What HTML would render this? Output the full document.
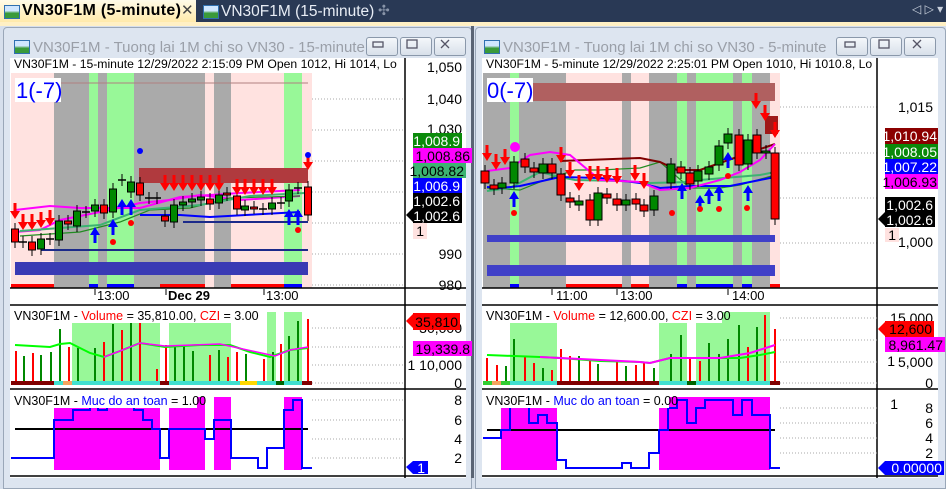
<!DOCTYPE html>
<html><head><meta charset="utf-8"><style>
body{margin:0;width:946px;height:478px;overflow:hidden;background:#d6dfec;font-family:"Liberation Sans",sans-serif;position:relative}
.tabbar{position:absolute;left:0;top:0;width:946px;height:23px;background:#293955}
.strip{position:absolute;left:0;top:22px;width:946px;height:4px;background:#fff0c4}
.tab1{position:absolute;left:0;top:0;width:196px;height:23px;background:linear-gradient(#fffbe8,#ffe9a8);}
.tab1 span{position:absolute;left:22px;top:2px;font-size:16px;letter-spacing:0.3px;font-weight:bold;color:#000}
.tab1 i{position:absolute;left:181px;top:1px;font-style:normal;font-size:15px;color:#444}
.tab2{position:absolute;left:202px;top:3px;font-size:15.5px;color:#e8edf5}
.ico{position:absolute;width:14px;height:12px;background:linear-gradient(#cfe6ff 40%,#3a9a3a 60%);border:1px solid #3070b0}
.win{position:absolute;top:27px;height:460px;background:#dde5f0;border:1px solid #9aa7b8;border-radius:4px 4px 0 0}
.title{position:absolute;top:11px;font-size:15px;color:#9a9fa8;white-space:nowrap}
.btn{position:absolute;top:9px;width:30px;height:17px;border:1px solid #8a98aa;border-radius:3px;background:linear-gradient(#f4f7fb,#d8e0ea)}
svg{position:absolute;left:0;top:0}
</style></head><body>
<div class="tabbar"></div>
<div class="tab1"><div class="ico" style="left:4px;top:5px"></div><span>VN30F1M (5-minute)</span><i>✕</i></div>
<div class="ico" style="left:203px;top:5px"></div><div class="tab2" style="left:221px">VN30F1M (15-minute)</div>
<div style="position:absolute;left:378px;top:2px;color:#8894a8;font-size:14px">✣</div>
<div style="position:absolute;left:912px;top:2px;color:#c8d0dc;font-size:12px">◁ ▷ ▾</div>
<div class="strip"></div>

<div class="win" style="left:3px;width:467px">
 <div class="ico" style="left:10px;top:12px"></div>
 <div class="title" style="left:29px">VN30F1M - Tuong lai 1M chi so VN30 - 15-minute</div>
 <div class="btn" style="left:362px"></div><div class="btn" style="left:396px"></div><div class="btn" style="left:430px"></div>
</div>
<div class="win" style="left:475px;width:469px">
 <div class="ico" style="left:8px;top:12px"></div>
 <div class="title" style="left:27px">VN30F1M - Tuong lai 1M chi so VN30 - 5-minute</div>
 <div class="btn" style="left:360px"></div><div class="btn" style="left:394px"></div><div class="btn" style="left:428px"></div>
</div>
<div style="position:absolute;left:471px;top:26px;width:3px;height:452px;background:#5a6474"></div>

<svg width="946" height="478" id="s" font-family="Liberation Sans, sans-serif">
<g stroke="#556" stroke-width="1.3" fill="none">
<rect x="373" y="42" width="10" height="5"/><rect x="407" y="40" width="10" height="8"/><path d="M441 40l8 8M449 40l-8 8"/>
<rect x="845" y="42" width="10" height="5"/><rect x="879" y="40" width="10" height="8"/><path d="M913 40l8 8M921 40l-8 8"/>
</g>
<!-- LEFT chart -->
<rect x="10" y="58" width="456" height="420" fill="#fff"/>
<rect x="11" y="73" width="301" height="215" fill="#ffe2e0"/>
<g fill="#aaaaaa"><rect x="54" y="73" width="35" height="215"/><rect x="98" y="73" width="9" height="215"/><rect x="134" y="73" width="71" height="215"/><rect x="214" y="73" width="17" height="215"/></g>
<g fill="#98f898"><rect x="89" y="73" width="9" height="215"/><rect x="107" y="73" width="27" height="215"/><rect x="284" y="73" width="18" height="215"/></g>
<rect x="11" y="284" width="43" height="4" fill="#f00"/><rect x="89" y="284" width="9" height="4" fill="#00f"/><rect x="107" y="284" width="27" height="4" fill="#00f"/><rect x="160" y="284" width="45" height="4" fill="#f00"/><rect x="231" y="284" width="53" height="4" fill="#f00"/><rect x="284" y="284" width="18" height="4" fill="#00f"/>
<line x1="60" y1="83" x2="308" y2="83" stroke="#b08080"/>
<rect x="15" y="78" width="46" height="24" fill="#fff"/>
<text x="16" y="98" font-size="22" fill="#0000ff">1(-7)</text>
<rect x="139" y="168" width="169" height="15" fill="#b03a3e"/>
<rect x="15" y="262" width="293" height="13" fill="#3a3ab4"/>
<line x1="41" y1="250" x2="308" y2="250" stroke="#1c2a8a" stroke-width="2"/>
<line x1="183" y1="222" x2="308" y2="222" stroke="#1c2a8a" stroke-width="2"/>
<polyline points="15,232 40,230 60,220 90,214 110,210 140,203 170,200 200,195 240,200 300,196" fill="none" stroke="#f0f" stroke-width="2"/>
<polyline points="15,210 50,206 80,208 140,208 180,197 240,193 300,190" fill="none" stroke="#f0f" stroke-width="2"/>
<polyline points="20,236 80,232 120,222 150,210 190,208 230,198 300,196" fill="none" stroke="#228b22" stroke-width="1.2"/>
<polyline points="20,231 100,225 140,210 200,205 250,196 305,193" fill="none" stroke="#3cb371" stroke-width="2"/>
<polyline points="140,215 180,215 210,217 300,212" fill="none" stroke="#0000ff" stroke-width="2"/>
<g id="lc"></g>
<text x="14" y="68" font-size="12.2" fill="#000">VN30F1M - 15-minute 12/29/2022 2:15:09 PM Open 1012, Hi 1014, Lo</text>
<g stroke="#aaa" stroke-dasharray="1,2"><line x1="312" y1="99" x2="405" y2="99"/><line x1="312" y1="130" x2="405" y2="130"/><line x1="312" y1="161" x2="405" y2="161"/><line x1="312" y1="192" x2="405" y2="192"/><line x1="312" y1="223" x2="405" y2="223"/><line x1="312" y1="254" x2="405" y2="254"/><line x1="312" y1="285" x2="405" y2="285"/></g>
<g font-size="14" fill="#000" text-anchor="end"><text x="462" y="72">1,050</text><text x="462" y="104">1,040</text><text x="462" y="134">1,030</text><text x="462" y="259">990</text><text x="462" y="290">980</text></g>
<g font-size="14" text-anchor="end">
<rect x="413" y="133" width="49" height="15" fill="#0a8a0a"/><text x="460" y="146" fill="#fff">1,008.9</text>
<rect x="413" y="148" width="59" height="15" fill="#f0f"/><text x="470" y="161" fill="#000">1,008.86</text>
<rect x="413" y="163" width="53" height="15" fill="#3cb371"/><text x="464" y="176" fill="#000">1,008.82</text>
<rect x="413" y="178" width="49" height="15" fill="#0000ff"/><text x="460" y="191" fill="#fff">1,006.9</text>
<rect x="413" y="193" width="49" height="30" fill="#000"/><polygon points="406,215 413,208 413,222" fill="#000"/><text x="460" y="206" fill="#fff">1,002.6</text><text x="460" y="221" fill="#fff">1,002.6</text>
<rect x="413" y="223" width="14" height="16" fill="#ffe2e0"/><text x="424" y="236" fill="#000">1</text></g>
<g stroke="#000" stroke-width="1.5"><line x1="405" y1="58" x2="405" y2="478"/><line x1="10" y1="288" x2="466" y2="288"/><line x1="10" y1="305" x2="466" y2="305"/><line x1="10" y1="389" x2="466" y2="389"/><line x1="10" y1="476" x2="466" y2="476"/></g>
<g stroke="#000"><line x1="95" y1="289" x2="95" y2="295"/><line x1="166" y1="289" x2="166" y2="295"/><line x1="264" y1="289" x2="264" y2="295"/></g>
<g font-size="13"><text x="97" y="300">13:00</text><text x="168" y="300" font-weight="bold">Dec 29</text><text x="266" y="300">13:00</text></g>
<!-- left volume -->
<g fill="#98f898"><rect x="72" y="312" width="88" height="69"/><rect x="169" y="312" width="62" height="69"/><rect x="267" y="312" width="9" height="69"/><rect x="284" y="312" width="18" height="69"/></g>
<rect x="11" y="381" width="301" height="4" fill="#40e0d0"/><rect x="11" y="381" width="43" height="4" fill="#800000"/><rect x="160" y="381" width="9" height="4" fill="#800000"/><rect x="276" y="381" width="8" height="4" fill="#006400"/><rect x="302" y="381" width="10" height="4" fill="#800000"/><rect x="240" y="381" width="17" height="4" fill="#ffd700"/><rect x="63" y="381" width="9" height="4" fill="#f4a460"/>
<g id="lv"></g>
<polyline points="15,345 50,347 60,344 70,343 90,353 104,357 120,351 140,343 165,347 200,345 230,345 250,352 270,357 290,350 308,348" fill="none" stroke="#0f0" stroke-width="2"/>
<polyline points="104,357 120,351 140,343 165,346 220,344 275,356 290,350 308,347" fill="none" stroke="#f0f" stroke-width="1.5"/>
<rect x="13" y="309" width="237" height="14" fill="#fff"/>
<text x="14" y="320" font-size="12.5"><tspan fill="#000">VN30F1M - </tspan><tspan fill="#f00">Volume</tspan><tspan fill="#000"> = 35,810.00, </tspan><tspan fill="#f00">CZI</tspan><tspan fill="#000"> = 3.00</tspan></text>
<g stroke="#aaa" stroke-dasharray="1,2"><line x1="312" y1="328" x2="405" y2="328"/><line x1="312" y1="347" x2="405" y2="347"/><line x1="312" y1="365" x2="405" y2="365"/><line x1="312" y1="383" x2="405" y2="383"/></g>
<g font-size="14" text-anchor="end"><text x="462" y="333">30,000</text><text x="462" y="370">1 10,000</text><text x="462" y="388">0</text>
<rect x="413" y="313" width="47" height="17" fill="#f00"/><polygon points="406,321 413,314 413,328" fill="#f00"/><text x="458" y="327" fill="#000">35,810</text>
<rect x="413" y="341" width="59" height="15" fill="#f0f"/><text x="470" y="354" fill="#000">19,339.8</text></g>
<!-- left safety -->
<g fill="#f0f"><rect x="54" y="397" width="106" height="73"/><rect x="169" y="397" width="36" height="73"/><rect x="214" y="397" width="17" height="73"/><rect x="284" y="397" width="18" height="73"/></g>
<line x1="15" y1="429" x2="308" y2="429" stroke="#000" stroke-width="2"/>
<polyline points="11,458 54,458 54,420 73,420 73,410 90,410 90,406 98,406 98,410 107,410 107,406 134,406 134,410 143,410 143,420 152,420 152,429 160,429 160,458 169,458 169,429 205,429 205,439 214,439 214,420 231,420 231,458 258,458 258,468 267,468 267,448 284,448 284,410 293,410 293,400 302,400 302,468 312,468" fill="none" stroke="#0000ff" stroke-width="2"/>
<rect x="13" y="394" width="184" height="14" fill="#fff"/>
<text x="14" y="405" font-size="12.5"><tspan fill="#000">VN30F1M - </tspan><tspan fill="#0000ff">Muc do an toan</tspan><tspan fill="#000"> = 1.00</tspan></text>
<g stroke="#aaa" stroke-dasharray="1,2"><line x1="312" y1="400" x2="405" y2="400"/><line x1="312" y1="420" x2="405" y2="420"/><line x1="312" y1="439" x2="405" y2="439"/><line x1="312" y1="458" x2="405" y2="458"/></g>
<g font-size="14" text-anchor="end"><text x="462" y="405">8</text><text x="462" y="425">6</text><text x="462" y="444">4</text><text x="462" y="463">2</text>
<rect x="413" y="461" width="15" height="13" fill="#0000ff"/><polygon points="406,467 413,461 413,474" fill="#0000ff"/><text x="425" y="473" fill="#fff">1</text></g>

<!-- RIGHT chart -->
<rect x="482" y="58" width="456" height="420" fill="#fff"/>
<rect x="483" y="73" width="297" height="215" fill="#ffe2e0"/>
<g fill="#aaaaaa"><rect x="483" y="73" width="27" height="215"/><rect x="519" y="73" width="47" height="215"/><rect x="622" y="73" width="9" height="215"/><rect x="649" y="73" width="28" height="215"/><rect x="687" y="73" width="9" height="215"/><rect x="733" y="73" width="9" height="215"/><rect x="752" y="73" width="18" height="215"/></g>
<g fill="#98f898"><rect x="510" y="73" width="9" height="215"/><rect x="677" y="73" width="10" height="215"/><rect x="696" y="73" width="37" height="215"/><rect x="742" y="73" width="10" height="215"/></g>
<rect x="566" y="284" width="56" height="4" fill="#f00"/><rect x="631" y="284" width="18" height="4" fill="#f00"/><rect x="770" y="284" width="10" height="4" fill="#f00"/><rect x="510" y="284" width="9" height="4" fill="#00f"/><rect x="677" y="284" width="10" height="4" fill="#00f"/><rect x="696" y="284" width="37" height="4" fill="#00f"/><rect x="742" y="284" width="10" height="4" fill="#00f"/>
<rect x="487" y="78" width="46" height="24" fill="#fff"/>
<text x="487" y="98" font-size="22" fill="#0000ff">0(-7)</text>
<rect x="533" y="83" width="242" height="18" fill="#b06060"/>
<rect x="487" y="235" width="288" height="7" fill="#4040c8"/>
<rect x="487" y="265" width="288" height="11" fill="#4040c8"/>
<rect x="765" y="116" width="13" height="18" fill="#a01818"/>
<polyline points="487,188 520,190 545,180 575,170 600,170 640,168 660,162 690,188 720,188 740,185 775,175" fill="none" stroke="#228b22" stroke-width="1.2"/>
<polyline points="487,191 510,188 540,172 560,177 575,180 620,181 650,183 690,182 700,180 760,175 775,172" fill="none" stroke="#3cb371" stroke-width="2"/>
<polyline points="560,161 640,158 660,162 677,170 700,170 740,156 775,144" fill="none" stroke="#800000" stroke-width="2"/>
<polyline points="487,187 500,188 520,186 560,177 600,178 640,183 660,188 690,186 730,186 760,180 775,177" fill="none" stroke="#0000ff" stroke-width="2"/>
<polyline points="487,171 510,168 530,155 550,152 570,155 600,180 640,182 660,190 690,188 720,180 740,172 760,160 775,144" fill="none" stroke="#f0f" stroke-width="2"/>
<circle cx="515" cy="147" r="5" fill="#f0f"/>
<g id="rc"></g>
<text x="486" y="68" font-size="12.2" fill="#000">VN30F1M - 5-minute 12/29/2022 2:25:01 PM Open 1010, Hi 1010.8, Lo</text>
<g stroke="#aaa" stroke-dasharray="1,2"><line x1="780" y1="107" x2="877" y2="107"/><line x1="780" y1="153" x2="877" y2="153"/><line x1="780" y1="198" x2="877" y2="198"/><line x1="780" y1="243" x2="877" y2="243"/></g>
<g font-size="14" text-anchor="end"><text x="933" y="112">1,015</text><text x="933" y="247">1,000</text>
<rect x="885" y="128" width="53" height="16" fill="#8b0000"/><text x="937" y="141" fill="#fff">1,010.94</text>
<rect x="885" y="144" width="53" height="15" fill="#0a8a0a"/><text x="937" y="157" fill="#fff">1,008.05</text>
<rect x="885" y="159" width="53" height="15" fill="#0000ff"/><text x="937" y="172" fill="#fff">1,007.22</text>
<rect x="885" y="174" width="53" height="15" fill="#f0f"/><text x="937" y="187" fill="#000">1,006.93</text>
<rect x="885" y="197" width="50" height="30" fill="#000"/><polygon points="878,219 885,212 885,226" fill="#000"/><text x="933" y="210" fill="#fff">1,002.6</text><text x="933" y="225" fill="#fff">1,002.6</text>
<rect x="885" y="228" width="14" height="14" fill="#ffe2e0"/><text x="896" y="240" fill="#000">1</text></g>
<g stroke="#000" stroke-width="1.5"><line x1="877" y1="58" x2="877" y2="478"/><line x1="482" y1="288" x2="938" y2="288"/><line x1="482" y1="305" x2="938" y2="305"/><line x1="482" y1="389" x2="938" y2="389"/><line x1="482" y1="476" x2="938" y2="476"/></g>
<g stroke="#000"><line x1="552" y1="289" x2="552" y2="295"/><line x1="617" y1="289" x2="617" y2="295"/><line x1="728" y1="289" x2="728" y2="295"/></g>
<g font-size="13"><text x="556" y="300">11:00</text><text x="620" y="300">13:00</text><text x="732" y="300">14:00</text></g>
<!-- right volume -->
<g fill="#98f898"><rect x="510" y="312" width="47" height="69"/><rect x="659" y="322" width="28" height="59"/><rect x="696" y="312" width="74" height="69"/></g>
<rect x="483" y="381" width="297" height="4" fill="#40e0d0"/><rect x="483" y="381" width="27" height="4" fill="#32cd32"/><rect x="492" y="381" width="9" height="4" fill="#f4a460"/><rect x="557" y="381" width="102" height="4" fill="#800000"/><rect x="687" y="381" width="9" height="4" fill="#006400"/><rect x="770" y="381" width="10" height="4" fill="#800000"/>
<g id="rv"></g>
<polyline points="487,355 540,357 560,358 600,361 640,362 650,363 670,358 700,358 740,358 760,355 775,352" fill="none" stroke="#0f0" stroke-width="2"/>
<polyline points="540,357 560,358 640,362 650,363 670,358 720,358 750,353 775,345" fill="none" stroke="#f0f" stroke-width="2"/>
<rect x="485" y="309" width="237" height="14" fill="#fff"/>
<text x="486" y="320" font-size="12.5"><tspan fill="#000">VN30F1M - </tspan><tspan fill="#f00">Volume</tspan><tspan fill="#000"> = 12,600.00, </tspan><tspan fill="#f00">CZI</tspan><tspan fill="#000"> = 3.00</tspan></text>
<g stroke="#aaa" stroke-dasharray="1,2"><line x1="780" y1="318" x2="877" y2="318"/><line x1="780" y1="340" x2="877" y2="340"/><line x1="780" y1="362" x2="877" y2="362"/><line x1="780" y1="383" x2="877" y2="383"/></g>
<g font-size="14" text-anchor="end"><text x="933" y="323">15,000</text><text x="933" y="367">5,000</text><text x="895" y="366">1</text><text x="933" y="388">0</text>
<rect x="885" y="321" width="49" height="16" fill="#f00"/><polygon points="878,329 885,322 885,336" fill="#f00"/><text x="932" y="334" fill="#000">12,600</text>
<rect x="885" y="337" width="60" height="15" fill="#f0f"/><text x="943" y="350" fill="#000">8,961.47</text></g>
<!-- right safety -->
<g fill="#f0f"><rect x="501" y="397" width="56" height="73"/><rect x="659" y="397" width="111" height="73"/></g>
<line x1="487" y1="430" x2="775" y2="430" stroke="#000" stroke-width="2"/>
<polyline points="483,438 501,438 501,430 510,430 510,407 519,407 519,407 529,407 529,423 538,423 538,415 547,415 547,423 557,423 557,460 566,460 566,468 622,468 622,463 631,463 631,468 649,468 649,453 659,453 659,430 668,430 668,408 677,408 677,400 687,400 687,423 696,423 696,408 705,408 705,400 733,400 733,415 742,415 742,400 752,400 752,415 770,415 770,468 780,468" fill="none" stroke="#0000ff" stroke-width="2"/>
<rect x="485" y="394" width="184" height="14" fill="#fff"/>
<text x="486" y="405" font-size="12.5"><tspan fill="#000">VN30F1M - </tspan><tspan fill="#0000ff">Muc do an toan</tspan><tspan fill="#000"> = 0.00</tspan></text>
<g stroke="#aaa" stroke-dasharray="1,2"><line x1="780" y1="408" x2="877" y2="408"/><line x1="780" y1="423" x2="877" y2="423"/><line x1="780" y1="438" x2="877" y2="438"/><line x1="780" y1="453" x2="877" y2="453"/></g>
<g font-size="14" text-anchor="end"><text x="898" y="409">1</text><text x="933" y="413">8</text><text x="933" y="428">6</text><text x="933" y="443">4</text><text x="933" y="458">2</text>
<rect x="885" y="461" width="59" height="14" fill="#0000ff"/><polygon points="878,468 885,461 885,475" fill="#0000ff"/><text x="942" y="473" fill="#fff">0.00000</text></g>
</svg>
<script>
var NS="http://www.w3.org/2000/svg";
function el(g,t,a){var e=document.createElementNS(NS,t);for(var k in a)e.setAttribute(k,a[k]);g.appendChild(e);}
function candles(id,d,w){var g=document.getElementById(id);d.forEach(function(c){var x=c[0],t=c[1],b=c[2],col=c[3];
el(g,'line',{x1:x,y1:t-6,x2:x,y2:b+6,stroke:'#000'});
if(col=='x'){el(g,'line',{x1:x-4,y1:t,x2:x+4,y2:t,stroke:'#000','stroke-width':1.5});return;}
el(g,'rect',{x:x-w/2,y:t,width:w,height:Math.max(2,b-t),fill:col=='r'?'#f00':'#080',stroke:'#000'});});}
function arrows(id,d,col,down){var g=document.getElementById(id);d.forEach(function(a){var x=a[0],y=a[1];
if(down)el(g,'polygon',{points:(x-1.5)+','+(y-8)+' '+(x+1.5)+','+(y-8)+' '+(x+1.5)+','+y+' '+(x+5)+','+y+' '+x+','+(y+8)+' '+(x-5)+','+y+' '+(x-1.5)+','+y,fill:col});
else el(g,'polygon',{points:(x-1.5)+','+(y+8)+' '+(x+1.5)+','+(y+8)+' '+(x+1.5)+','+y+' '+(x+5)+','+y+' '+x+','+(y-8)+' '+(x-5)+','+y+' '+(x-1.5)+','+y,fill:col});});}
function dots(id,d,col){var g=document.getElementById(id);d.forEach(function(a){el(g,'circle',{cx:a[0],cy:a[1],r:3,fill:col});});}
function bars(id,d,base){var g=document.getElementById(id);d.forEach(function(b){el(g,'rect',{x:b[0]-1,y:b[1],width:2,height:base-b[1],fill:b[2]=='r'?'#f00':'#080'});});}
candles('lc',[[15,229,242,'r'],[23,242,242,'x'],[32,242,250,'r'],[41,239,249,'g'],[50,239,239,'x'],[59,221,240,'g'],[68,221,224,'r'],[77,211,226,'g'],[86,212,212,'x'],[95,205,211,'g'],[104,205,213,'r'],[113,189,212,'g'],[122,180,180,'x'],[131,182,192,'g'],[140,183,195,'r'],[149,198,198,'x'],[157,198,198,'x'],[165,216,221,'r'],[174,205,222,'g'],[183,202,205,'g'],[192,199,202,'g'],[201,197,200,'g'],[210,199,204,'r'],[219,195,203,'g'],[227,193,195,'r'],[237,196,209,'r'],[245,206,210,'g'],[254,207,208,'r'],[263,209,209,'x'],[272,203,209,'g'],[281,203,203,'x'],[289,190,201,'g'],[298,188,188,'x'],[308,187,215,'r']],7);
arrows('lc',[[15,211],[23,222],[32,222],[41,220],[50,218],[165,183],[174,183],[183,183],[192,183],[201,183],[210,183],[219,183],[237,187],[245,187],[254,187],[263,187],[272,187],[308,162]],'#f00',true);
arrows('lc',[[95,235],[113,227],[122,207],[131,207],[289,217],[298,217]],'#00f',false);
dots('lc',[[113,242],[131,223],[298,230]],'#f00');dots('lc',[[140,151],[308,155]],'#00f');
candles('rc',[[485,171,183,'r'],[494,185,189,'r'],[502,183,188,'g'],[514,162,183,'g'],[525,159,167,'r'],[534,168,172,'r'],[543,164,173,'g'],[552,164,173,'r'],[561,174,195,'r'],[570,198,202,'r'],[579,201,205,'g'],[590,200,220,'r'],[598,193,220,'g'],[607,194,198,'r'],[617,199,205,'r'],[626,200,205,'g'],[636,199,204,'r'],[644,205,211,'r'],[654,196,210,'g'],[671,164,183,'g'],[681,167,173,'r'],[690,173,184,'r'],[698,171,181,'g'],[709,167,174,'g'],[719,146,165,'g'],[728,134,143,'g'],[739,135,165,'r'],[748,140,164,'g'],[757,135,153,'r'],[766,151,153,'g'],[775,153,219,'r']],8);
arrows('rc',[[487,153],[496,162],[505,157],[561,155],[570,170],[579,183],[590,174],[598,174],[607,175],[617,176],[635,173],[644,181],[756,101],[765,113],[775,130]],'#f00',true);
arrows('rc',[[514,199],[682,191],[709,196],[700,203],[719,193],[748,193],[728,160]],'#00f',false);
dots('rc',[[514,213],[672,213],[700,209],[719,209],[728,176],[747,208]],'#f00');
bars('lv',[[16,351,'r'],[24,356,'g'],[33,353,'r'],[41,355,'g'],[51,352,'g'],[60,329,'g'],[69,347,'r'],[78,348,'g'],[95,348,'g'],[104,342,'r'],[113,324,'g'],[122,330,'r'],[131,322,'g'],[140,322,'r'],[157,369,'r'],[166,345,'r'],[175,346,'g'],[184,345,'g'],[193,351,'g'],[210,355,'r'],[219,350,'g'],[228,357,'r'],[237,352,'r'],[246,354,'g'],[264,359,'r'],[273,352,'g'],[281,344,'r'],[289,336,'g'],[298,321,'g'],[308,319,'r']],381);
bars('rv',[[487,358,'r'],[497,365,'r'],[506,366,'g'],[514,339,'g'],[525,357,'r'],[534,363,'r'],[543,368,'g'],[552,370,'r'],[561,349,'r'],[570,356,'r'],[579,356,'g'],[590,360,'r'],[598,364,'g'],[617,360,'r'],[626,366,'g'],[636,365,'r'],[644,362,'r'],[654,368,'g'],[671,354,'g'],[681,335,'g'],[690,359,'r'],[700,361,'r'],[709,343,'g'],[719,354,'g'],[728,339,'g'],[739,325,'g'],[748,347,'r'],[757,327,'g'],[765,315,'r'],[775,350,'g'],[775,329,'r']],381);
</script>
</body></html>
